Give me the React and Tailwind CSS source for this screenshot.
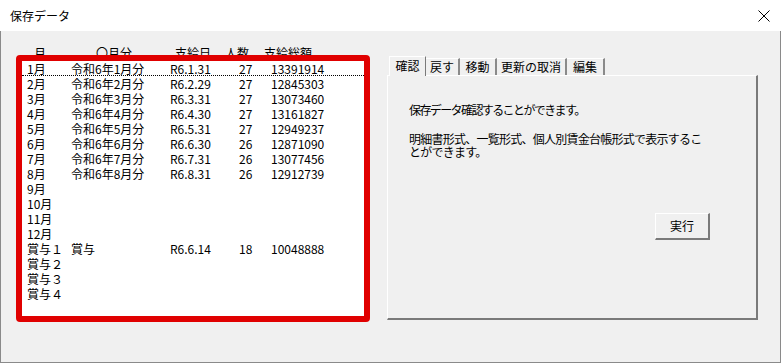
import React from 'react';

const rows = [
  ['1月', '令和6年1月分', 'R6.1.31', '27', '13391914'],
  ['2月', '令和6年2月分', 'R6.2.29', '27', '12845303'],
  ['3月', '令和6年3月分', 'R6.3.31', '27', '13073460'],
  ['4月', '令和6年4月分', 'R6.4.30', '27', '13161827'],
  ['5月', '令和6年5月分', 'R6.5.31', '27', '12949237'],
  ['6月', '令和6年6月分', 'R6.6.30', '26', '12871090'],
  ['7月', '令和6年7月分', 'R6.7.31', '26', '13077456'],
  ['8月', '令和6年8月分', 'R6.8.31', '26', '12912739'],
  ['9月', '', '', '', ''],
  ['10月', '', '', '', ''],
  ['11月', '', '', '', ''],
  ['12月', '', '', '', ''],
  ['賞与１', '賞与', 'R6.6.14', '18', '10048888'],
  ['賞与２', '', '', '', ''],
  ['賞与３', '', '', '', ''],
  ['賞与４', '', '', '', ''],
];

const tabs = [
  { label: '確認', w: 'w-[37px]', active: true },
  { label: '戻す', w: 'w-[34px]' },
  { label: '移動', w: 'w-[37px]' },
  { label: '更新の取消', w: 'w-[70px]' },
  { label: '編集', w: 'w-[38px]' },
];

const font = { fontFamily: '"Noto Sans CJK JP", "Noto Sans", sans-serif' };

const App = () => {
  return (
    <div className="w-[781px] h-[363px] bg-[#f0f0f0] text-black text-[12px] flex flex-col overflow-hidden" style={font}>
      {/* title bar */}
      <div className="h-[31px] bg-white flex items-center justify-between pl-[10px] pr-[10px] shrink-0">
        <span className="text-[12px] leading-none">保存データ</span>
        <svg width="12" height="12" viewBox="0 0 12 12" className="mr-[1px]">
          <path d="M0.5 0.5 L11.5 11.5 M11.5 0.5 L0.5 11.5" stroke="#000" strokeWidth="1" />
        </svg>
      </div>

      {/* body */}
      <div className="flex-1 flex border-l border-r border-b border-[#8a8a8a]">
        {/* list side */}
        <div className="w-[369px] pl-[15px] pt-[14px] flex flex-col">
          <div className="flex h-[15px] leading-[15px]">
            <span className="w-[18px] ml-[18px]">月</span>
            <span className="w-[79px] ml-[44px]">〇月分</span>
            <span className="w-[50px]">支給日</span>
            <span className="w-[39px]">人数</span>
            <span>支給総額</span>
          </div>
          <div className="relative z-10 -mt-[5px] w-[354px] h-[267px] border-[6px] border-[#e00000] rounded-[4px] bg-white">
            <div className="flex flex-col">
              {rows.map((r, i) => (
                <div
                  key={i}
                  className={`flex h-[15px] leading-[15px] pl-[5px] ${i === 0 ? 'border-b border-dotted border-black' : ''}`}
                >
                  <span className="w-[44px] shrink-0">{r[0]}</span>
                  <span className="w-[99px] shrink-0">{r[1]}</span>
                  <span className="w-[69px] shrink-0">{r[2]}</span>
                  <span className="w-[32px] shrink-0">{r[3]}</span>
                  <span>{r[4]}</span>
                </div>
              ))}
            </div>
          </div>
        </div>

        {/* tab side */}
        <div className="ml-[17px] pt-[24px] flex flex-col">
          <div className="flex items-end h-[20px] pl-[2px] relative z-10">
            {tabs.map((t) =>
              t.active ? (
                <div
                  key={t.label}
                  className={`${t.w} h-[20px] -mb-[1px] bg-[#f0f0f0] border-t border-l border-white border-r border-r-[#7a7a7a] flex items-center justify-center leading-none pb-[2px]`}
                >
                  {t.label}
                </div>
              ) : (
                <div
                  key={t.label}
                  className={`${t.w} h-[17px] border-t border-white border-r-2 border-r-[#8a8a8a] flex items-center justify-center leading-none`}
                >
                  {t.label}
                </div>
              )
            )}
          </div>
          <div className="w-[371px] h-[245px] border-t border-l border-white border-r-2 border-b-2 border-r-[#7a7a7a] border-b-[#7a7a7a] flex flex-col pl-[21px] pt-[27px]">
            <p className="leading-[13px] tracking-[-1.6px]">保存データ確認することができます。</p>
            <p className="leading-[13px] mt-[16px] tracking-[-0.75px]">
              明細書形式、一覧形式、個人別賃金台帳形式で表示するこ
              <br />
              とができます。
            </p>
            <button className="self-end mr-[46px] mt-[55px] w-[55px] h-[27px] bg-[#f0f0f0] border-t border-l border-white border-r-2 border-b-2 border-r-[#7a7a7a] border-b-[#7a7a7a] text-[12px] leading-none">
              実行
            </button>
          </div>
        </div>
      </div>
    </div>
  );
};

export default App;
